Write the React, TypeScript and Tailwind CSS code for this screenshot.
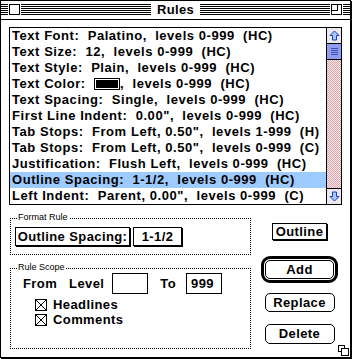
import type { ReactNode } from "react";

type Row = { text: string; after?: string; selected?: boolean };

const rows: Row[] = [
  { text: "Text Font:  Palatino,  levels 0-999  (HC)" },
  { text: "Text Size:  12,  levels 0-999  (HC)" },
  { text: "Text Style:  Plain,  levels 0-999  (HC)" },
  { text: "Text Color:  ", after: ",  levels 0-999  (HC)" },
  { text: "Text Spacing:  Single,  levels 0-999  (HC)" },
  { text: 'First Line Indent:  0.00",  levels 0-999  (HC)' },
  { text: 'Tab Stops:  From Left, 0.50",  levels 1-999  (H)' },
  { text: 'Tab Stops:  From Left, 0.50",  levels 0-999  (C)' },
  { text: "Justification:  Flush Left,  levels 0-999  (HC)" },
  { text: "Outline Spacing:  1-1/2,  levels 0-999  (HC)", selected: true },
  { text: 'Left Indent:  Parent, 0.00",  levels 0-999  (C)' },
];

function Stripes({ className = "" }: { className?: string }) {
  return (
    <div
      className={`mt-[3px] h-[11px] bg-[image:repeating-linear-gradient(to_bottom,#000_0,#000_1px,#fff_1px,#fff_2px)] ${className}`}
    />
  );
}

function TitleBar() {
  return (
    <div className="flex h-[19px] border-b border-black">
      <Stripes className="w-[7px]" />
      <div className="ml-[1px] mt-[3px] h-[11px] w-[11px] border border-black" />
      <Stripes className="ml-[1px] flex-1" />
      <div className="px-[6px] text-[13px] font-bold leading-[18px] tracking-[0.3px]">Rules</div>
      <Stripes className="flex-1" />
      {/* zoom box */}
      <div className="ml-[1px] mt-[3px] h-[11px] w-[11px] border border-black">
        <div className="h-[6px] w-[6px] border-b border-r border-black" />
      </div>
      <Stripes className="ml-[1px] w-[7px]" />
    </div>
  );
}

function Arrow({ down = false }: { down?: boolean }) {
  return (
    <svg width="11" height="11" viewBox="0 0 11 11" className={down ? "rotate-180" : ""}>
      <polygon
        points="5.5,1 10,5.5 7.5,5.5 7.5,10 3.5,10 3.5,5.5 1,5.5"
        fill="#a9c9ff"
        stroke="#1d3fb5"
        strokeWidth="1"
      />
    </svg>
  );
}

function ScrollBar() {
  return (
    <div className="flex w-[15px] flex-col border-l border-black">
      <div className="flex h-[16px] items-center justify-center border-b border-black bg-[#ece8f0]">
        <Arrow />
      </div>
      <div className="flex h-[16px] flex-col items-center justify-center gap-[1px] border-b border-black bg-[#8f9cf0]">
        <div className="h-[1px] w-[7px] bg-[#3f4fb0]" />
        <div className="h-[1px] w-[7px] bg-[#3f4fb0]" />
        <div className="h-[1px] w-[7px] bg-[#3f4fb0]" />
        <div className="h-[1px] w-[7px] bg-[#3f4fb0]" />
      </div>
      <div className="flex-1 bg-[image:repeating-conic-gradient(#d9a7b0_0_25%,#f9e6ea_0_50%)] bg-[length:2px_2px]" />
      <div className="flex h-[16px] items-center justify-center border-t border-black bg-[#ece8f0]">
        <Arrow down />
      </div>
    </div>
  );
}

function RuleList() {
  return (
    <div className="ml-[8px] mt-[7px] flex h-[178px] w-[333px] border border-black">
      <div className="flex-1 overflow-hidden tracking-[0.55px]">
        {rows.map((r, i) => (
          <div
            key={i}
            className={`flex h-[16px] items-center whitespace-pre pl-[2px] leading-[16px] ${
              r.selected ? "bg-[#9ecbff]" : ""
            }`}
          >
            {r.text}
            {r.after !== undefined && (
              <>
                <span className="inline-block h-[12px] w-[26px] border border-black p-[1px]">
                  <span className="block h-full w-full bg-black" />
                </span>
                {r.after}
              </>
            )}
          </div>
        ))}
      </div>
      <ScrollBar />
    </div>
  );
}

function Group({ label, className, children }: { label: string; className: string; children: ReactNode }) {
  return (
    <div className={`relative border border-dotted border-black ${className}`}>
      <span className="absolute left-[6px] top-[-7px] bg-white px-[1px] text-[9px] font-normal leading-[11px] tracking-normal">
        {label}
      </span>
      {children}
    </div>
  );
}

function Check({ label }: { label: string }) {
  return (
    <div className="flex h-[15px] items-center pl-[24px]">
      <svg width="12" height="12" viewBox="0 0 12 12">
        <rect x="0.5" y="0.5" width="11" height="11" fill="#fff" stroke="#000" />
        <path d="M1 1L11 11M11 1L1 11" stroke="#000" strokeWidth="1" />
      </svg>
      <span className="ml-[6px]">{label}</span>
    </div>
  );
}

function SizeBox() {
  return (
    <svg width="12" height="12" viewBox="0 0 12 12" className="absolute bottom-0 right-0">
      <rect x="0.5" y="0.5" width="6" height="6" fill="#fff" stroke="#000" />
      <rect x="3.5" y="3.5" width="7" height="7" fill="#fff" stroke="#000" />
    </svg>
  );
}

export default function App() {
  return (
    <div className="h-[359px] w-[352px] bg-white font-['Liberation_Sans',Arial,sans-serif] text-[13px] font-bold tracking-[0.4px] text-black">
      <div className="relative flex h-[358px] w-[351px] flex-col border border-black bg-white shadow-[1px_1px_0_#000]">
        <TitleBar />
        <RuleList />

        <div className="flex">
          <div className="ml-[9px] flex w-[241px] flex-col">
            <Group label="Format Rule" className="mt-[13px] h-[37px] pl-[4px] pt-[8px]">
              <div className="flex">
                <div className="flex h-[19px] w-[115px] items-center justify-center border border-black shadow-[1px_1px_0_#000]">
                  Outline Spacing:
                </div>
                <div className="ml-[3px] flex h-[19px] w-[49px] items-center justify-center border border-black shadow-[1px_1px_0_#000]">
                  1-1/2
                </div>
              </div>
            </Group>

            <Group label="Rule Scope" className="mt-[13px] h-[81px] pt-[4px]">
              <div className="flex h-[21px] items-center pl-[12px]">
                <span>From</span>
                <span className="ml-[12px]">Level</span>
                <div className="ml-[8px] h-[21px] w-[36px] border border-black" />
                <span className="ml-[12px]">To</span>
                <div className="ml-[10px] flex h-[21px] w-[36px] items-center border border-black pl-[4px]">
                  999
                </div>
              </div>
              <div className="mt-[3px]">
                <Check label="Headlines" />
                <Check label="Comments" />
              </div>
            </Group>
          </div>

          <div className="ml-[10px] flex w-[77px] flex-col items-center">
            <div className="mt-[18px] flex h-[17px] w-[55px] items-center justify-center border border-black shadow-[1px_1px_0_#000]">
              Outline
            </div>
            <div className="mt-[16px] h-[27px] w-[77px] rounded-[9px] border-[3px] border-black p-[1px]">
              <div className="flex h-full w-full items-center justify-center rounded-[5px] border border-black">
                Add
              </div>
            </div>
            <div className="mt-[10px] flex h-[19px] w-[70px] items-center justify-center rounded-[5px] border border-black">
              Replace
            </div>
            <div className="mt-[12px] flex h-[20px] w-[70px] items-center justify-center rounded-[5px] border border-black">
              Delete
            </div>
          </div>
        </div>

        <SizeBox />
      </div>
    </div>
  );
}
